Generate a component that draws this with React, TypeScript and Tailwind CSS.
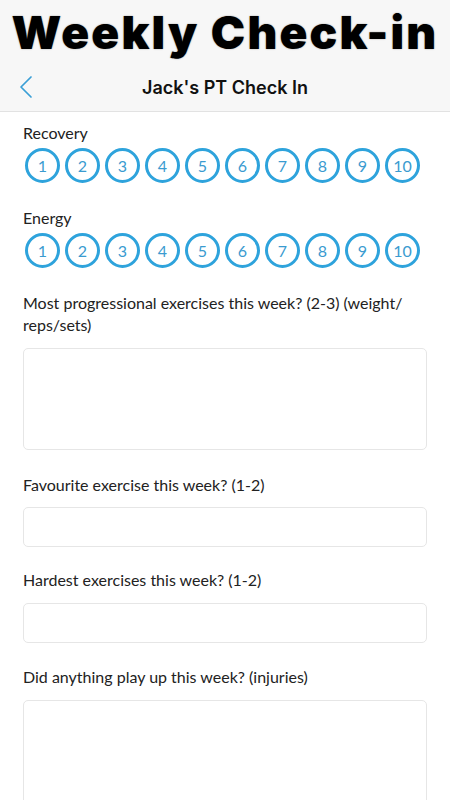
import React from "react";

const label = "text-[16px] leading-[22px] text-[#222]";
const font = { fontFamily: "Lato, 'Noto Sans', sans-serif" };

function Scale() {
  return (
    <div className="flex gap-[5px] pl-[2px] mt-[4px]">
      {[1, 2, 3, 4, 5, 6, 7, 8, 9, 10].map((n) => (
        <div
          key={n}
          className="w-[35px] h-[35px] rounded-full border-[3px] border-[#2ea3dc] flex items-center justify-center text-[16px] text-[#3a9bd0]"
          style={font}
        >
          {n}
        </div>
      ))}
    </div>
  );
}

export default function App() {
  return (
    <div className="w-[450px] h-[800px] overflow-hidden bg-white" style={font}>
      <div className="bg-[#f7f7f7] border-b border-[#e2e2e2]">
        <div
          className="h-[63px] flex items-center justify-center text-[46px] font-black text-black tracking-[2.2px] leading-none pt-[1px]"
          style={{ fontFamily: "Inter, sans-serif", textShadow: "0 0 1.5px #888" }}
        >
          Weekly Check-in
        </div>
        <div className="h-[48px] relative flex items-center justify-center">
          <svg
            className="absolute left-[18px] top-[12px]"
            width="16"
            height="24"
            viewBox="0 0 16 24"
            fill="none"
          >
            <path d="M13 2 L3 12 L13 22" stroke="#3a9fd6" strokeWidth="1.7" strokeLinecap="round" strokeLinejoin="round" />
          </svg>
          <div className="text-[18px] font-semibold text-[#111]" style={{ fontFamily: "Inter, sans-serif" }}>
            Jack's PT Check In
          </div>
        </div>
      </div>

      <div className="px-[23px] pt-[10px]">
        <div className={label}>Recovery</div>
        <Scale />

        <div className={`${label} mt-[24px]`}>Energy</div>
        <Scale />

        <div className={`${label} mt-[24px]`}>
          Most progressional exercises this week? (2-3) (weight/
          <br />
          reps/sets)
        </div>
        <div className="mt-[12px] h-[102px] rounded-[5px] border border-[#e6e6e6]" />

        <div className={`${label} mt-[24px]`}>Favourite exercise this week? (1-2)</div>
        <div className="mt-[11px] h-[40px] rounded-[5px] border border-[#e6e6e6]" />

        <div className={`${label} mt-[22px]`}>Hardest exercises this week? (1-2)</div>
        <div className="mt-[12px] h-[40px] rounded-[5px] border border-[#e6e6e6]" />

        <div className={`${label} mt-[23px]`}>Did anything play up this week? (injuries)</div>
        <div className="mt-[12px] h-[120px] rounded-[5px] border border-[#e6e6e6]" />
      </div>
    </div>
  );
}
